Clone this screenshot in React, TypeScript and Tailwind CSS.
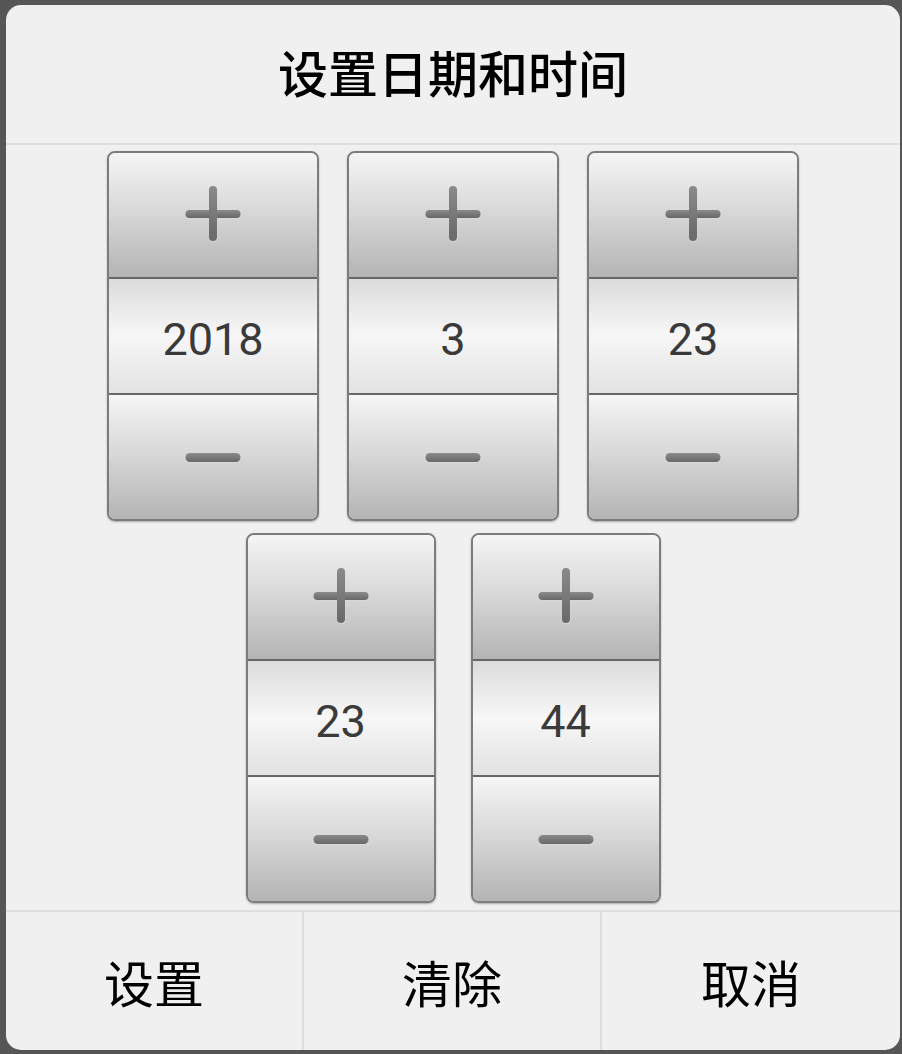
import React from 'react';

const cjk = { fontFamily: '"Noto Sans CJK SC", "Noto Sans", sans-serif' };
const num = { fontFamily: 'Roboto, "Noto Sans", sans-serif' };

const PlusIcon = () => (
  <svg width="58" height="58" viewBox="0 0 58 58">
    <defs>
      <linearGradient id="pg" x1="0" y1="0" x2="0" y2="1">
        <stop offset="0" stopColor="#8a8a8a" />
        <stop offset="1" stopColor="#686868" />
      </linearGradient>
    </defs>
    <rect x="1.5" y="26" width="55" height="8" rx="4" fill="#d8d8d8" />
    <rect x="25.5" y="2" width="8" height="55" rx="4" fill="#d8d8d8" />
    <rect x="1.5" y="25" width="55" height="8" rx="4" fill="url(#pg)" />
    <rect x="25" y="1" width="8" height="55" rx="4" fill="url(#pg)" />
  </svg>
);

const MinusIcon = () => (
  <svg width="58" height="14" viewBox="0 0 58 14">
    <defs>
      <linearGradient id="mg" x1="0" y1="0" x2="0" y2="1">
        <stop offset="0" stopColor="#8a8a8a" />
        <stop offset="1" stopColor="#686868" />
      </linearGradient>
    </defs>
    <rect x="1.5" y="4" width="55" height="9" rx="4.5" fill="#d8d8d8" />
    <rect x="1.5" y="3" width="55" height="9" rx="4.5" fill="url(#mg)" />
  </svg>
);

const Picker = ({ value, width }: { value: string; width: string }) => (
  <div
    className={`${width} h-[370px] flex flex-col rounded-[8px] overflow-hidden border-2 border-[#7c7c7c] shadow-[0_1px_2px_rgba(0,0,0,0.3)]`}
  >
    <div className="h-[124px] flex items-center justify-center pb-[3px] bg-linear-to-b from-[#f5f5f5] via-[#d6d6d6] to-[#b4b4b4]">
      <PlusIcon />
    </div>
    <div
      className="h-[118px] flex items-center justify-center pt-[8px] border-y-2 border-[#666666] bg-linear-to-b from-[#dcdcdc] via-[#f7f7f7] to-[#e2e2e2] text-[45px] font-normal text-[#3a3a3a]"
      style={num}
    >
      {value}
    </div>
    <div className="flex-1 flex items-center justify-center bg-linear-to-b from-[#f5f5f5] via-[#d6d6d6] to-[#b4b4b4]">
      <MinusIcon />
    </div>
  </div>
);

const App = () => {
  return (
    <div className="w-[902px] h-[1054px] bg-[#565656] pt-[5px] pl-[6px] pr-[2px] pb-[4px]">
      <div className="w-[894px] h-[1045px] rounded-[15px] bg-[#f0f0f0] flex flex-col overflow-hidden">
        <div
          className="h-[140px] flex items-center justify-center pb-[6px] border-b-2 border-[#dedede] text-[50px] font-medium text-black"
          style={cjk}
        >
          设置日期和时间
        </div>

        <div className="flex-1 flex flex-col items-center pt-[6px] gap-[12px]">
          <div className="flex gap-[28px]">
            <Picker value="2018" width="w-[212px]" />
            <Picker value="3" width="w-[212px]" />
            <Picker value="23" width="w-[212px]" />
          </div>
          <div className="flex gap-[35px]">
            <Picker value="23" width="w-[190px]" />
            <Picker value="44" width="w-[190px]" />
          </div>
        </div>

        <div
          className="h-[140px] grid grid-cols-3 border-t-2 border-[#dedede] text-[50px] text-black"
          style={cjk}
        >
          <div className="flex items-center justify-center border-r-2 border-[#dedede]">设置</div>
          <div className="flex items-center justify-center border-r-2 border-[#dedede]">清除</div>
          <div className="flex items-center justify-center">取消</div>
        </div>
      </div>
    </div>
  );
};

export default App;
